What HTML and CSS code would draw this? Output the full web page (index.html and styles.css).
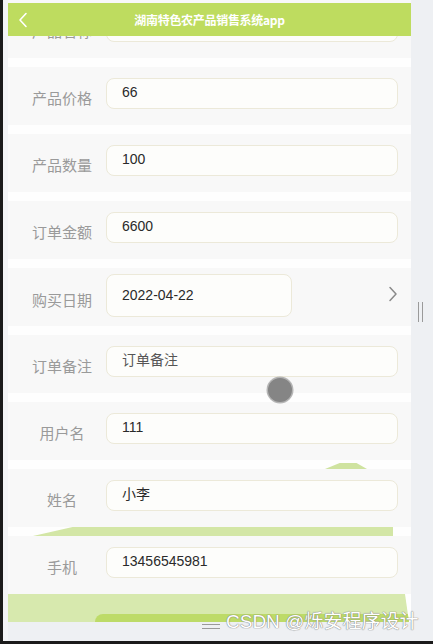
FILE: index.html
```html
<!DOCTYPE html>
<html lang="zh">
<head>
<meta charset="utf-8">
<title>湖南特色农产品销售系统app</title>
<link rel="stylesheet" href="styles.css">
</head>
<body>
<div class="frame">
  <div class="gutter"></div>
  <div class="column">
    <div class="app">
      <header class="topbar">
        <svg class="back" width="10" height="16" viewBox="0 0 10 16"><path d="M8 1.5 L2 8 L8 14.5" fill="none" stroke="#fff" stroke-width="1.6" stroke-linecap="round" stroke-linejoin="round"/></svg>
        <h1 class="title">湖南特色农产品销售系统app</h1>
      </header>
      <div class="form">
        <div class="row"><div class="row-body"><span class="label">产品名称</span><div class="field"></div></div></div>
        <div class="row"><div class="row-body"><span class="label">产品价格</span><div class="field">66</div></div></div>
        <div class="row"><div class="row-body"><span class="label">产品数量</span><div class="field">100</div></div></div>
        <div class="row"><div class="row-body"><span class="label">订单金额</span><div class="field">6600</div></div></div>
        <div class="row"><div class="row-body"><span class="label label-date">购买日期</span><div class="field field-date">2022-04-22</div>
          <svg class="chev" width="10" height="16" viewBox="0 0 10 16"><path d="M2 1.5 L8 8 L2 14.5" fill="none" stroke="#8a8a8a" stroke-width="1.5" stroke-linecap="round" stroke-linejoin="round"/></svg></div></div>
        <div class="row"><div class="row-body"><span class="label">订单备注</span><div class="field field-ph">订单备注</div></div></div>
        <div class="row"><div class="row-body"><span class="label">用户名</span><div class="field">111</div></div></div>
        <div class="row row-hill"><div class="row-body"><span class="label">姓名</span><div class="field">小李</div></div></div>
        <div class="row row-slope"><div class="row-body"><span class="label">手机</span><div class="field">13456545981</div></div></div>
        <div class="footer-green"><div class="footer-dark"></div></div>
      </div>
      <div class="touch"></div>
    </div>
  </div>
  <div class="rail"><div class="thumb"></div></div>
  <div class="watermark"><span class="wm-lines"></span>CSDN @烁安程序设计</div>
</div>
</body>
</html>
```
FILE: styles.css
```css
html, body {
  margin: 0;
  padding: 0;
}
body {
  width: 433px;
  height: 644px;
  overflow: hidden;
  background: #eef0f3;
  font-family: "Noto Sans CJK SC", "Liberation Sans", sans-serif;
}
.frame {
  position: relative;
  display: flex;
  height: 641px;
  border-left: 3px solid #1b1b1b;
  border-bottom: 3px solid #1b1b1b;
  box-sizing: content-box;
  width: 430px;
}
.gutter {
  width: 5px;
  background: #f3f4f6;
}
.column {
  width: 403px;
  display: flex;
  flex-direction: column;
}
.app {
  position: relative;
  height: 622px;
  overflow: hidden;
  background: #ffffff;
}
.topbar {
  position: absolute;
  top: 3px;
  left: 0;
  right: 0;
  height: 33px;
  background: #bedc5f;
  display: flex;
  align-items: center;
  justify-content: center;
  z-index: 2;
}
.back {
  position: absolute;
  left: 10px;
  top: 9px;
}
.title {
  margin: 0;
  color: #ffffff;
  font-size: 12px;
  font-weight: 700;
  letter-spacing: -0.3px;
}
.form {
  margin-top: -9px;
  display: flex;
  flex-direction: column;
}
.row {
  position: relative;
  padding-top: 9px;
  background: #fefefe;
}
.row-body {
  height: 58px;
  background: #f8f8f8;
  display: flex;
  align-items: flex-start;
}
.label {
  width: 88px;
  margin-left: 10px;
  margin-top: 21px;
  text-align: center;
  font-size: 15px;
  line-height: 20px;
  color: #9a9a9a;
}
.label-date {
  margin-top: 22px;
}
.field {
  box-sizing: border-box;
  width: 292px;
  height: 31px;
  margin-top: 11px;
  padding-left: 15px;
  border: 1px solid #ece9d9;
  border-radius: 8px;
  background: #fdfdfb;
  font-family: "Liberation Sans", "Noto Sans CJK SC", sans-serif;
  font-size: 14px;
  line-height: 26px;
  color: #2a2a2a;
}
.field-date {
  width: 186px;
  height: 43px;
  margin-top: 6px;
  line-height: 41px;
}
.field-ph {
  color: #555;
}
.chev {
  margin-left: auto;
  margin-right: 13px;
  margin-top: 18px;
}
.row-hill::before {
  content: "";
  position: absolute;
  left: 317px;
  top: 3px;
  width: 42px;
  height: 6px;
  background: #cfe3a0;
  clip-path: polygon(35% 0, 75% 0, 100% 100%, 0 100%);
}
.row-slope::before {
  content: "";
  position: absolute;
  left: 25px;
  top: 0;
  width: 360px;
  height: 9px;
  background: #d3e6a6;
  clip-path: polygon(11% 0, 100% 0, 100% 100%, 0 100%);
}
.footer-green {
  height: 28px;
  margin-right: 2px;
  background: #d7e9ae;
  display: flex;
  flex-direction: column;
  justify-content: flex-end;
  clip-path: polygon(0 0, 99% 0, 100% 100%, 0 100%);
}
.footer-dark {
  height: 8px;
  margin-left: 87px;
  background: #bddb68;
  border-top-left-radius: 8px;
}
.touch {
  position: absolute;
  left: 260px;
  top: 378px;
  width: 24px;
  height: 24px;
  border-radius: 50%;
  background: #858585;
  box-shadow: 0 0 0 1.5px #b5b5b5;
  z-index: 3;
}
.rail {
  flex: 1;
  background: #eef0f3;
  padding-top: 302px;
  padding-left: 7px;
}
.thumb {
  width: 3px;
  height: 20px;
  border-left: 1.5px solid #9a9a9a;
  border-right: 1.5px solid #9a9a9a;
}
.watermark {
  position: absolute;
  left: 199px;
  top: 610px;
  display: flex;
  align-items: center;
  gap: 6px;
  font-family: "Liberation Sans", "Noto Sans CJK SC", sans-serif;
  font-size: 19px;
  line-height: 24px;
  color: #ffffff;
  text-shadow: 0 0 1px #777, 0 0 1px #777;
  z-index: 4;
}
.wm-lines {
  width: 18px;
  height: 3px;
  margin-top: 8px;
  border-top: 1.5px solid #9a9a9a;
  border-bottom: 1.5px solid #9a9a9a;
}
```
